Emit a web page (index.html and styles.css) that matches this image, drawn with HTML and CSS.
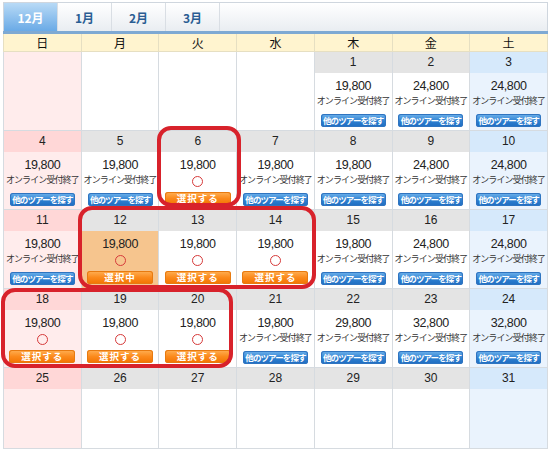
FILE: index.html
```html
<!DOCTYPE html>
<html>
<head>
    <title>ツアーカレンダー</title>
    <link rel="stylesheet" href="styles.css">
</head>
<body>
    <div class="calendar-box">
        <div class="month-tabs">
            <a class="tab active">12月</a>
            <a class="tab">1月</a>
            <a class="tab">2月</a>
            <a class="tab">3月</a>
        </div>

        <table class="calendar">
            <tr class="weekdays">
                <th>日</th><th>月</th><th>火</th><th>水</th><th>木</th><th>金</th><th>土</th>
            </tr>
            <tr>
                <td class="empty sun"></td>
                <td class="empty"></td>
                <td class="empty"></td>
                <td class="empty"></td>
                <td><div class="date">1</div><div class="info"><p class="price">19,800</p><p class="closed">オンライン受付終了</p><a class="btn-blue">他のツアーを探す</a></div></td>
                <td><div class="date">2</div><div class="info"><p class="price">24,800</p><p class="closed">オンライン受付終了</p><a class="btn-blue">他のツアーを探す</a></div></td>
                <td class="sat"><div class="date">3</div><div class="info"><p class="price">24,800</p><p class="closed">オンライン受付終了</p><a class="btn-blue">他のツアーを探す</a></div></td>
            </tr>
            <tr>
                <td class="sun"><div class="date">4</div><div class="info"><p class="price">19,800</p><p class="closed">オンライン受付終了</p><a class="btn-blue">他のツアーを探す</a></div></td>
                <td><div class="date">5</div><div class="info"><p class="price">19,800</p><p class="closed">オンライン受付終了</p><a class="btn-blue">他のツアーを探す</a></div></td>
                <td><div class="date">6</div><div class="info"><p class="price">19,800</p><p class="mark"><span class="circle"></span></p><a class="btn-orange">選択する</a></div></td>
                <td><div class="date">7</div><div class="info"><p class="price">19,800</p><p class="closed">オンライン受付終了</p><a class="btn-blue">他のツアーを探す</a></div></td>
                <td><div class="date">8</div><div class="info"><p class="price">19,800</p><p class="closed">オンライン受付終了</p><a class="btn-blue">他のツアーを探す</a></div></td>
                <td><div class="date">9</div><div class="info"><p class="price">24,800</p><p class="closed">オンライン受付終了</p><a class="btn-blue">他のツアーを探す</a></div></td>
                <td class="sat"><div class="date">10</div><div class="info"><p class="price">24,800</p><p class="closed">オンライン受付終了</p><a class="btn-blue">他のツアーを探す</a></div></td>
            </tr>
            <tr>
                <td class="sun"><div class="date">11</div><div class="info"><p class="price">19,800</p><p class="closed">オンライン受付終了</p><a class="btn-blue">他のツアーを探す</a></div></td>
                <td class="selected"><div class="date">12</div><div class="info"><p class="price">19,800</p><p class="mark"><span class="circle"></span></p><a class="btn-orange">選択中</a></div></td>
                <td><div class="date">13</div><div class="info"><p class="price">19,800</p><p class="mark"><span class="circle"></span></p><a class="btn-orange">選択する</a></div></td>
                <td><div class="date">14</div><div class="info"><p class="price">19,800</p><p class="mark"><span class="circle"></span></p><a class="btn-orange">選択する</a></div></td>
                <td><div class="date">15</div><div class="info"><p class="price">19,800</p><p class="closed">オンライン受付終了</p><a class="btn-blue">他のツアーを探す</a></div></td>
                <td><div class="date">16</div><div class="info"><p class="price">24,800</p><p class="closed">オンライン受付終了</p><a class="btn-blue">他のツアーを探す</a></div></td>
                <td class="sat"><div class="date">17</div><div class="info"><p class="price">24,800</p><p class="closed">オンライン受付終了</p><a class="btn-blue">他のツアーを探す</a></div></td>
            </tr>
            <tr>
                <td class="sun"><div class="date">18</div><div class="info"><p class="price">19,800</p><p class="mark"><span class="circle"></span></p><a class="btn-orange">選択する</a></div></td>
                <td><div class="date">19</div><div class="info"><p class="price">19,800</p><p class="mark"><span class="circle"></span></p><a class="btn-orange">選択する</a></div></td>
                <td><div class="date">20</div><div class="info"><p class="price">19,800</p><p class="mark"><span class="circle"></span></p><a class="btn-orange">選択する</a></div></td>
                <td><div class="date">21</div><div class="info"><p class="price">19,800</p><p class="closed">オンライン受付終了</p><a class="btn-blue">他のツアーを探す</a></div></td>
                <td><div class="date">22</div><div class="info"><p class="price">29,800</p><p class="closed">オンライン受付終了</p><a class="btn-blue">他のツアーを探す</a></div></td>
                <td><div class="date">23</div><div class="info"><p class="price">32,800</p><p class="closed">オンライン受付終了</p><a class="btn-blue">他のツアーを探す</a></div></td>
                <td class="sat"><div class="date">24</div><div class="info"><p class="price">32,800</p><p class="closed">オンライン受付終了</p><a class="btn-blue">他のツアーを探す</a></div></td>
            </tr>
            <tr class="last-week">
                <td class="sun"><div class="date">25</div><div class="info"></div></td>
                <td><div class="date">26</div><div class="info"></div></td>
                <td><div class="date">27</div><div class="info"></div></td>
                <td><div class="date">28</div><div class="info"></div></td>
                <td><div class="date">29</div><div class="info"></div></td>
                <td><div class="date">30</div><div class="info"></div></td>
                <td class="sat"><div class="date">31</div><div class="info"></div></td>
            </tr>
        </table>

        <!-- hand-drawn highlight marks -->
        <div class="mark-ring ring-1"></div>
        <div class="mark-ring ring-2"></div>
        <div class="mark-ring ring-3"></div>
    </div>
</body>
</html>
```

FILE: styles.css
```css
body {
    margin: 0;
    background: #fff;
    font-family: 'Liberation Sans', 'Noto Sans CJK JP', sans-serif;
    color: #222;
}

.calendar-box {
    position: relative;
    width: 545px;
    padding: 2px 0 0 3px;
}

.month-tabs {
    display: flex;
    height: 29px;
    border: 1px solid #cfd6de;
    border-bottom: none;
    background: linear-gradient(#ffffff, #e9edf1);
    box-sizing: border-box;
}

.tab {
    width: 53px;
    display: flex;
    align-items: center;
    justify-content: center;
    border-right: 1px solid #d9dee4;
    color: #2a5d93;
    font-family: 'Noto Sans CJK JP', sans-serif;
    font-size: 12px;
    font-weight: bold;
}

.tab.active {
    background: linear-gradient(#b8daf6, #6aaae6);
    color: #fff;
}

.calendar {
    width: 545px;
    table-layout: fixed;
    border-collapse: collapse;
    border-top: 3px solid #7ea9d3;
    border-bottom: 1px solid #c9d0d7;
}

.calendar th,
.calendar td {
    border: 1px solid #d6dbe0;
    padding: 0;
}

.weekdays th {
    height: 17px;
    background: #fff4cf;
    border-color: #e6dfc2;
    font-family: 'Noto Sans CJK JP', sans-serif;
    font-weight: normal;
    font-size: 12px;
    line-height: 17px;
    color: #111;
}

.calendar td {
    height: 78px;
    vertical-align: top;
    text-align: center;
    background: #fff;
}

.calendar td.empty { height: 78px; }
.calendar td.sun { background: #ffecec; }
.calendar td.sat { background: #eaf3fd; }

.date {
    height: 21px;
    line-height: 21px;
    font-size: 12px;
    background: #e4e4e4;
    color: #222;
}

.sun .date { background: #ffd7d7; }
.sat .date { background: #d6e9fb; }

.info {
    height: 57px;
    padding-top: 5px;
    box-sizing: border-box;
}

.last-week td { height: 80px; }
.last-week .info { height: 59px; }

.selected .info { background: #f6c58e; }

.info p {
    margin: 0;
}

.price {
    font-size: 12.5px;
    line-height: 16px;
    letter-spacing: -0.4px;
    color: #222;
}

.closed {
    font-family: 'Noto Sans CJK JP', sans-serif;
    font-size: 9px;
    line-height: 14px;
    color: #333;
    letter-spacing: -0.9px;
    white-space: nowrap;
}

.mark {
    height: 16px;
    display: flex;
    align-items: center;
    justify-content: center;
}

.circle {
    width: 9px;
    height: 9px;
    border: 1.5px solid #d63a3a;
    border-radius: 50%;
}

.btn-blue,
.btn-orange {
    display: block;
    width: 65px;
    height: 13px;
    margin: 6px auto 0;
    border-radius: 3px;
    color: #fff;
    font-family: 'Noto Sans CJK JP', sans-serif;
    font-size: 8.5px;
    font-weight: bold;
    line-height: 13px;
    letter-spacing: -0.9px;
    white-space: nowrap;
}

.btn-blue {
    background: linear-gradient(#6fb3ec, #2d7fd0 55%, #1e6cc0);
    box-shadow: inset 0 0 0 1px #2f74c0;
}

.btn-orange {
    width: 66px;
    margin-top: 3px;
    font-size: 9.5px;
    background: linear-gradient(#ffb055, #fb8a1c 50%, #f27300);
    box-shadow: inset 0 0 0 1px #e77a10;
    letter-spacing: 1px;
}

.mark-ring {
    position: absolute;
    border: 4px solid #d8222b;
    border-radius: 14px;
    box-sizing: border-box;
}

.ring-1 { left: 157px; top: 126px; width: 84px; height: 81px; }
.ring-2 { left: 78px; top: 206px; width: 238px; height: 83px; }
.ring-3 { left: 1px; top: 288px; width: 232px; height: 80px; }
```
